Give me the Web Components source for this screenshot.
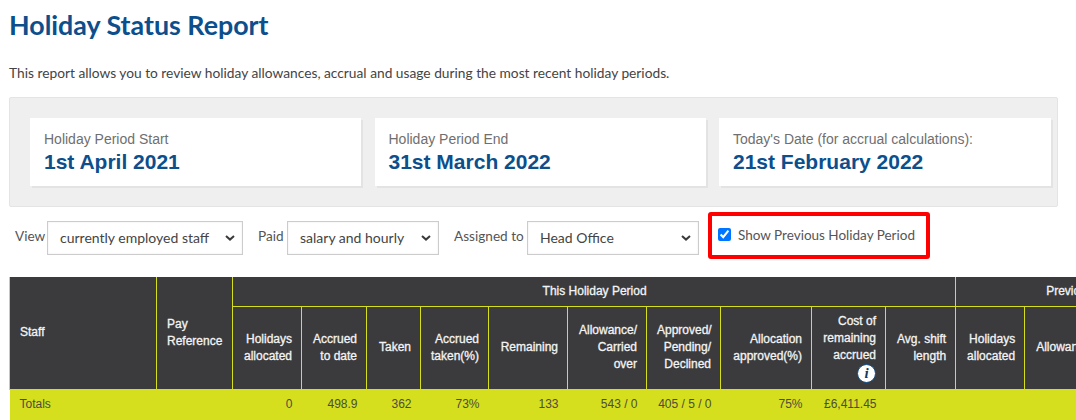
<!DOCTYPE html>
<html lang="en">
<head>
<meta charset="utf-8">
<title>Holiday Status Report</title>
<style>
  html, body { margin: 0; background: #fff; overflow: hidden; }
  body { width: 1076px; height: 420px; font-family: Lato, sans-serif; color: #444; }
</style>
</head>
<body>
<status-report></status-report>

<script>
"use strict";

// date card inside the grey panel
class StatCard extends HTMLElement {
  connectedCallback() {
    const shadow = this.attachShadow({mode: "open"});
    shadow.innerHTML = `
      <style>
        :host { display: block; background: #fff; box-shadow: 2px 2px 0 #e3e3e3; height: 68px; padding: 13px 14px 0; box-sizing: border-box; font-family: "Liberation Sans", sans-serif; }
        .label { font-size: 14px; line-height: 16px; color: #6f6f6f; }
        .value { font-size: 21px; line-height: 30px; font-weight: 700; color: #0c4f8c; }
      </style>
      <div class="label">${this.getAttribute("label")}</div>
      <div class="value"><slot></slot></div>`;
  }
}
customElements.define("stat-card", StatCard);

// label + select, native arrow swapped for the chevron used on the site
class FilterSelect extends HTMLElement {
  connectedCallback() {
    const shadow = this.attachShadow({mode: "open"});
    shadow.innerHTML = `
      <style>
        :host { display: flex; align-items: flex-start; }
        label { width: ${this.getAttribute("label-width")}px; font: 13.6px/17px Lato, sans-serif; color: #555; padding-top: 7px; white-space: nowrap; }
        .wrap { position: relative; display: block; height: 34px; }
        select { appearance: none; display: block; width: ${this.getAttribute("width")}px; height: 34px; box-sizing: border-box; border: 1px solid #ccc; border-radius: 0; background: #fff; box-shadow: inset 0 0 2px #e8e8e8; padding: 0 24px 2px 12px; font: 14px Lato, sans-serif; color: #444; }
        svg { position: absolute; right: 8px; top: 14px; pointer-events: none; }
      </style>
      <label for="sel">${this.getAttribute("label")}</label>
      <span class="wrap">
        <select id="sel"><option>${this.getAttribute("value")}</option></select>
        <svg width="10" height="6" viewBox="0 0 10 6"><path d="M1 1l4 3.6L9 1" fill="none" stroke="#3a3a3a" stroke-width="2"/></svg>
      </span>`;
  }
}
customElements.define("filter-select", FilterSelect);

// checkbox in the red highlight
class PeriodToggle extends HTMLElement {
  connectedCallback() {
    const shadow = this.attachShadow({mode: "open"});
    shadow.innerHTML = `
      <style>
        :host { display: flex; align-items: center; width: 222px; height: 47px; box-sizing: border-box; border: 4px solid #f00; border-radius: 3px; padding: 0 0 0 6px; gap: 7px; }
        input { margin: 0 0 2px; width: 13px; height: 13px; accent-color: #0075ff; }
        label { font: 13.5px/17px Lato, sans-serif; color: #555; white-space: nowrap; }
      </style>
      <input id="prev" type="checkbox" checked>
      <label for="prev"><slot></slot></label>`;
  }
}
customElements.define("period-toggle", PeriodToggle);

// the report table, wider than the window so it runs off to the right
class HolidayTable extends HTMLElement {
  connectedCallback() {
    const shadow = this.attachShadow({mode: "open"});
    const widths = [147, 76, 69, 65, 54, 68, 79, 79, 74, 91, 74, 70, 69, 90];
    const cols = widths.map(w => `<col style="width:${w}px">`).join("");
    shadow.innerHTML = `
      <style>
        :host { display: block; font: 400 12px/17px "Liberation Sans", sans-serif; overflow: hidden; height: 143px; }
        table { border-collapse: collapse; table-layout: fixed; width: ${widths.reduce((a, b) => a + b, 0)}px; }
        th { background: #3b3b3d; color: #f4f4f4; border: 1px solid #d6df1d; border-top: 0; padding: 0 9px 0 10px; text-align: right; font-weight: 400; -webkit-text-stroke: .3px #f4f4f4; height: 83px; box-sizing: border-box; }
        tr.group th { height: 29px; text-align: center; }
        th.left, tr.group th.left { text-align: left; }
        th.nowrap, tr.group th.nowrap { white-space: nowrap; }
        td { background: #d6df1d; color: #4c4c3a; height: 31px; padding: 6px 9px 0 10px; text-align: right; border: 0; box-sizing: border-box; vertical-align: top; }
        td.left { text-align: left; }
        .info { display: block; margin: 0 0 0 auto; width: 19px; height: 19px; border-radius: 50%; background: #fff; border: 1px solid #0c4f8c; box-sizing: border-box; color: #123a63; font: italic 700 15px/17px "Liberation Serif", serif; -webkit-text-stroke: 0; text-align: center; }
      </style>
      <table>
        <colgroup>${cols}</colgroup>
        <thead>
          <tr class="group">
            <th rowspan="2" class="left">Staff</th>
            <th rowspan="2" class="left">Pay Reference</th>
            <th colspan="10">This Holiday Period</th>
            <th colspan="2" class="left nowrap" style="padding-left:90px">Previous Holiday Period</th>
          </tr>
          <tr>
            <th>Holidays allocated</th>
            <th>Accrued to date</th>
            <th>Taken</th>
            <th>Accrued taken(%)</th>
            <th>Remaining</th>
            <th>Allowance/ Carried over</th>
            <th>Approved/ Pending/ Declined</th>
            <th>Allocation approved(%)</th>
            <th>Cost of remaining accrued<span class="info">i</span></th>
            <th>Avg. shift length</th>
            <th>Holidays allocated</th>
            <th class="left nowrap" style="padding-left:11px">Allowance</th>
          </tr>
        </thead>
        <tbody>
          <tr>
            <td class="left">Totals</td><td></td>
            <td>0</td><td>498.9</td><td>362</td><td>73%</td><td>133</td>
            <td>543 / 0</td><td>405 / 5 / 0</td><td>75%</td><td>£6,411.45</td>
            <td></td><td></td><td></td>
          </tr>
        </tbody>
      </table>`;
  }
}
customElements.define("holiday-table", HolidayTable);

// page shell
class StatusReport extends HTMLElement {
  connectedCallback() {
    const shadow = this.attachShadow({mode: "open"});
    shadow.innerHTML = `
      <style>
        :host { display: block; font-family: Lato, sans-serif; }
        h1 { margin: 0; padding: 8px 0 0 9px; height: 64px; box-sizing: border-box; font: 700 26.8px/34px Lato, sans-serif; color: #0c4f8c; }
        p { margin: 0; padding-left: 9px; font-size: 13.75px; line-height: 17px; height: 33px; color: #444; }
        .panel { margin: 0 18px 0 9px; height: 110px; box-sizing: border-box; background: #efefef; border: 1px solid #e4e4e4; border-radius: 2px; padding: 20px 6px 0 20px; display: grid; grid-template-columns: 331px 331px 332px; gap: 13.5px; }
        .filters { display: flex; align-items: flex-start; padding: 5px 0 0 15px; height: 70px; box-sizing: border-box; }
        .filters filter-select { margin: 9px 15px 0 0; }
        .filters period-toggle { margin-left: -6px; }
        holiday-table { margin-left: 9px; }
      </style>
      <h1>Holiday Status Report</h1>
      <p>This report allows you to review holiday allowances, accrual and usage during the most recent holiday periods.</p>
      <div class="panel">
        <stat-card label="Holiday Period Start">1st April 2021</stat-card>
        <stat-card label="Holiday Period End">31st March 2022</stat-card>
        <stat-card label="Today's Date (for accrual calculations):">21st February 2022</stat-card>
      </div>
      <div class="filters">
        <filter-select label="View" label-width="32" width="196" value="currently employed staff"></filter-select>
        <filter-select label="Paid" label-width="29" width="152" value="salary and hourly"></filter-select>
        <filter-select label="Assigned to" label-width="73" width="172" value="Head Office"></filter-select>
        <period-toggle>Show Previous Holiday Period</period-toggle>
      </div>
      <holiday-table></holiday-table>`;
  }
}
customElements.define("status-report", StatusReport);
</script>
</body>
</html>
